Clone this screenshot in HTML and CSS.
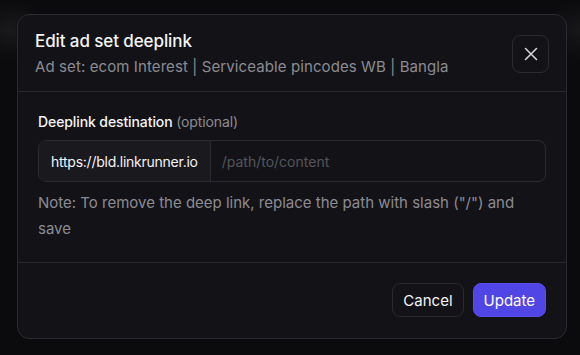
FILE: index.html
```html
<!DOCTYPE html>
<html lang="en">
<head>
    <meta charset="UTF-8">
    <meta name="viewport" content="width=device-width, initial-scale=1.0">
    <title>Edit ad set deeplink</title>
    <link rel="stylesheet" href="styles.css">
</head>
<body>

<div class="modal">
    <div class="modal-header">
        <div class="modal-titles">
            <h2 class="modal-title">Edit ad set deeplink</h2>
            <p class="modal-subtitle">Ad set: ecom Interest | Serviceable pincodes WB | Bangla</p>
        </div>
        <button class="close-button" aria-label="Close">
            <svg width="16" height="16" viewBox="0 0 16 16" fill="none">
                <path d="M2.5 2.5L13.5 13.5M13.5 2.5L2.5 13.5" stroke="#d4d4d8" stroke-width="1.6" stroke-linecap="round"/>
            </svg>
        </button>
    </div>

    <div class="modal-body">
        <label class="field-label">Deeplink destination <span class="field-optional">(optional)</span></label>
        <div class="input-group">
            <span class="input-prefix">https://bld.linkrunner.io</span>
            <input class="input-path" type="text" placeholder="/path/to/content">
        </div>
        <p class="field-note">Note: To remove the deep link, replace the path with slash ("/") and save</p>
    </div>

    <div class="modal-footer">
        <button class="btn btn-secondary">Cancel</button>
        <button class="btn btn-primary">Update</button>
    </div>
</div>

</body>
</html>
```

FILE: styles.css
```css
body {
    font-family: Inter, "Noto Sans", sans-serif;
    margin: 0;
    padding: 14px 13px 0 17px;
    height: 355px;
    box-sizing: border-box;
    overflow: hidden;
    background-color: #0b0b0d;
    background-image:
        radial-gradient(ellipse 40px 30px at 10px 30px, rgba(255, 255, 255, 0.06), transparent),
        radial-gradient(ellipse 40px 30px at 580px 30px, rgba(255, 255, 255, 0.05), transparent);
    color: #f4f4f5;
}
.modal {
    width: 550px;
    box-sizing: border-box;
    background-color: #131317;
    border: 1px solid #2a2a30;
    border-radius: 12px;
}
.modal-header {
    display: flex;
    justify-content: space-between;
    align-items: flex-start;
    padding: 15px 17px 13px 17px;
    border-bottom: 1px solid #27272c;
}
.modal-title {
    margin: 0;
    font-size: 17px;
    font-weight: 500;
    line-height: 22px;
    color: #f4f4f5;
    letter-spacing: -0.1px;
}
.modal-subtitle {
    margin: 4px 0 0;
    font-size: 15px;
    line-height: 22px;
    color: #8b8b93;
    letter-spacing: 0.1px;
}
.close-button {
    width: 37px;
    height: 38px;
    margin-top: 5px;
    display: flex;
    align-items: center;
    justify-content: center;
    background: transparent;
    border: 1px solid #2a2a30;
    border-radius: 8px;
    padding: 0;
    cursor: pointer;
}
.modal-body {
    padding: 20px 20px 20px 20px;
    border-bottom: 1px solid #27272c;
}
.field-label {
    display: block;
    font-size: 14px;
    font-weight: 500;
    line-height: 20px;
    color: #f4f4f5;
    margin-bottom: 8px;
    letter-spacing: -0.1px;
}
.field-optional {
    font-weight: 400;
    color: #8b8b93;
}
.input-group {
    display: flex;
    height: 42px;
    box-sizing: border-box;
    border: 1px solid #2a2a30;
    border-radius: 8px;
    overflow: hidden;
}
.input-prefix {
    display: flex;
    align-items: center;
    padding: 0 12px 0 12px;
    background-color: #19191e;
    border-right: 1px solid #2a2a30;
    font-size: 14px;
    letter-spacing: -0.25px;
    color: #f4f4f5;
    white-space: nowrap;
}
.input-path {
    flex: 1;
    background: transparent;
    border: none;
    outline: none;
    padding: 0 11px;
    font-family: inherit;
    font-size: 14px;
    color: #f4f4f5;
}
.input-path::placeholder {
    color: #55555c;
}
.field-note {
    margin: 8px 0 0;
    font-size: 15px;
    line-height: 26px;
    color: #8b8b93;
}
.modal-footer {
    display: flex;
    justify-content: flex-end;
    gap: 9px;
    padding: 20px 20px 21px;
}
.btn {
    height: 34px;
    padding: 0 10px;
    border-radius: 8px;
    font-family: inherit;
    font-size: 15px;
    cursor: pointer;
}
.btn-secondary {
    background: transparent;
    color: #f4f4f5;
    border: 1px solid #2a2a30;
}
.btn-primary {
    background-color: #5046e6;
    color: #ffffff;
    border: 1px solid #5a50f0;
}
```
